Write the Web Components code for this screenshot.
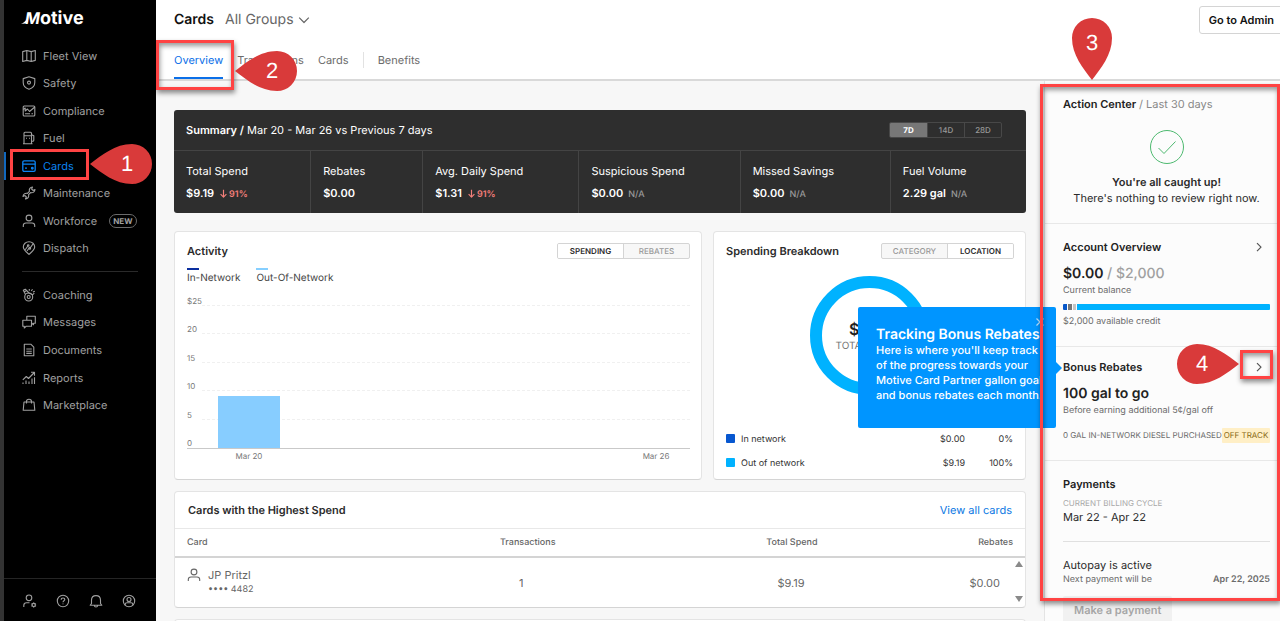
<!DOCTYPE html>
<html lang="en">
<head>
<meta charset="utf-8">
<meta name="viewport" content="width=device-width, initial-scale=1">
<title>Motive - Cards</title>
<style>
  body {
    margin: 0;
    font-family: Inter, "Liberation Sans", sans-serif;
    font-size: 11px;
    line-height: 16px;
    text-rendering: geometricPrecision;
    color: #2b2b2b;
    background: #f7f7f7;
  }
</style>
</head>
<body>

<motive-app></motive-app>

<script>

/**
 * MotiveElement
 *  - base class, renders the static template in an open shadow root
 */
class MotiveElement extends HTMLElement {

  static template = '';

  constructor() {
    super();
    const shadowRoot = this.attachShadow({mode: 'open'});
    shadowRoot.innerHTML = `
      <style>
        :host { display: block; box-sizing: border-box; }
        *, *::before, *::after { box-sizing: border-box; }
        :host([hidden]) { display: none; }
        button, select { font: inherit; color: inherit; margin: 0; padding: 0; border: 0; background: none; text-rendering: inherit; }
        h1, h2, h3, p, ul { margin: 0; padding: 0; font-size: inherit; }
        a { color: inherit; text-decoration: none; }
      </style>
      ${ this.constructor.template }`;
  }

}

/**
 * UiIcon
 *  - line icons on a 14 x 14 grid
 */
class UiIcon extends HTMLElement {

  static icons = {
    map: '<path d="M.7 2.6 4.8 1.5 9.2 2.6 13.3 1.5V11.4L9.2 12.5 4.8 11.4.7 12.5ZM4.8 1.5V11.4M9.2 2.6V12.5"/>',
    shield: '<path d="M7 .8 12.8 2.6V6.6C12.8 9.8 10.4 12.2 7 13.3 3.6 12.2 1.2 9.8 1.2 6.6V2.6Z"/><circle cx="7" cy="6.6" r="1.5"/>',
    compliance: '<rect x="1.2" y="2" width="11.6" height="10" rx="1"/><path d="M1.2 5.5 3.2 4V7L5.5 5 7.5 7.5 12.8 3M3 9.8H8M9.5 9.8H11"/>',
    fuel: '<path d="M2 12.8V2.2Q2 1.2 3 1.2H8.5Q9.5 1.2 9.5 2.2V12.8M1 12.8H10.5M2 4.8H9.5M4 7.3H5M7 7.3H8M9.5 3.8 11.8 4.8V9.3Q11.8 10.3 10.6 10.3H9.5"/>',
    card: '<rect x=".8" y="1.9" width="12.4" height="10.4" rx="1.3" stroke-width="1.3"/><path stroke-width="1.3" d="M.8 5.2H13.2M3 9.2H5"/><circle cx="10.3" cy="9.2" r=".9" fill="currentColor"/>',
    wrench: '<path d="M7.4 5.4C6.8 3 8.3 1.2 10.5 1L9.6 3 11 4.4 13 3.5C12.8 5.7 11 7.2 8.6 6.6L6.6 8.6C7.2 11 5.7 12.8 3.5 13L4.4 11 3 9.6 1 10.5C1.2 8.3 3 6.8 5.4 7.4Z"/>',
    person: '<circle cx="7" cy="4" r="2.9"/><path d="M1.3 13V11.6Q1.3 9 4 9H10Q12.7 9 12.7 11.6V13"/>',
    dispatch: '<path d="M7 13.4C4.5 11.3 1.3 8.8 1.3 6A5.7 5.3 0 0 1 12.7 6C12.7 8.8 9.5 11.3 7 13.4Z"/><path d="M3.2 8.8 6.2 4.5M5 10 7.8 6M7.8 7.4 11 3"/><circle cx="6.2" cy="4.5" r=".8"/><circle cx="7.8" cy="7.4" r=".8"/>',
    whistle: '<circle cx="6.7" cy="9" r="4"/><circle cx="6.7" cy="9" r="1.5"/><path d="M3.5 6.5 1.3 2.3 3.3 1.2 7 5 10.5 6.8 12.3 5.2M7.3 1V2.8M10.5 1.3 9.3 3M12.8 3.2 11 4M2.2 4 4.2 2.8"/>',
    messages: '<path d="M4.8 5V1.2H13.3V8.2H11.5V9.8L9.8 8.2M.8 5.2H9.5V11.3H4L2.3 13V11.3H.8Z"/>',
    document: '<path d="M2.3 1.2H8.8L11.8 4.2V12.8H2.3ZM4.3 6H9.8M4.3 8.2H9.8M4.3 10.4H9.8"/>',
    reports: '<path d="M1 13V11.5M4 13V9.5M7 13V10.5M10 13V7.5M12.5 13V6.2M.8 8.8 4.3 5.5 6.5 7.5 12.3 1.5M9 1.3H12.5V4.8"/>',
    bag: '<path d="M2 4H12L12.8 12.3H1.2ZM4.5 5.5V3.5Q4.5 1.2 7 1.2T9.5 3.5V5.5"/>',
    admin: '<circle cx="6" cy="3.8" r="2.8"/><path d="M.8 13V11.5Q.8 8.8 3.5 8.8H6.5"/><circle cx="10.7" cy="11" r="1.6"/><path d="M10.7 8.4V9.4M10.7 12.6V13.6M8.4 9.7 9.3 10.2M12.1 11.8 13 12.3M8.4 12.3 9.3 11.8M12.1 10.2 13 9.7"/>',
    help: '<circle cx="7" cy="7" r="5.7"/><path d="M5.2 5.7Q5.2 4 7 4T8.8 5.5C8.8 6.8 7 6.6 7 8.2M7 9.5V10.3"/>',
    bell: '<path d="M2.5 9.5V6.3Q2.5 1.6 7 1.6T11.5 6.3V9.5L12.8 11.3H1.2ZM5.3 11.5Q5.5 13 7 13T8.7 11.5"/>',
    account: '<circle cx="7" cy="7" r="5.7"/><circle cx="7" cy="5.5" r="2"/><path d="M3.2 11V10.3Q3.2 8.8 5 8.8H9Q10.8 8.8 10.8 10.3V11"/>',
    down: '<path stroke-width="1.2" d="M2.2 4.7 7 9.5 11.8 4.7"/>',
    right: '<path stroke-width="1.2" d="M5 3.2 9 7.2 5 11.2"/>',
    close: '<path stroke-width="1.2" d="M3.5 3.5 10.5 10.5M10.5 3.5 3.5 10.5"/>',
    fall: '<path stroke-width="1.8" d="M7 1V12.5M2.5 8 7 12.5 11.5 8"/>'
  };

  constructor() {
    super();
    this.attachShadow({mode: 'open'});
  }

  connectedCallback() {
    this.shadowRoot.innerHTML = `
      <style>
        :host { display: inline-block; flex: none; width: 14px; height: 14px; }
        :host([size="s"]) { width: 9px; height: 9px; }
        svg { display: block; width: 100%; height: 100%; fill: none; stroke: currentColor; stroke-width: 1.1; stroke-linejoin: round; }
      </style>
      <svg viewBox="0 0 14 14" aria-hidden="true">${ UiIcon.icons[this.getAttribute('name')] }</svg>`;
  }

}
customElements.define('ui-icon', UiIcon);

/**
 * NavItem
 *  - one line of the side navigation
 */
class NavItem extends MotiveElement {

  static template = `
    <style>
      :host { display: flex; color: #a0a0a0; }
      :host([active]) { color: #0b84f3; box-shadow: inset 2px 0 #1268bd; }
      a { display: flex; align-items: center; gap: 7px; flex: 1; padding-left: 18px; }
      ::slotted(span) {
        margin-left: 5px; padding: 0 3px; border: 1px solid #6b6b6b; border-radius: 7px;
        font-size: 8px; line-height: 12px; font-weight: 700;
      }
    </style>
    <a href="#"><ui-icon></ui-icon><slot></slot></a>`;

  connectedCallback() {
    const icon = this.shadowRoot.querySelector('ui-icon');
    icon.setAttribute('name', this.getAttribute('icon'));
    icon.connectedCallback();
  }

}
customElements.define('nav-item', NavItem);

/**
 * SideNav
 */
class SideNav extends MotiveElement {

  static template = `
    <style>
      :host { display: flex; flex-direction: column; background: #000; border-left: 4px solid #333; }
      .logo { display: flex; align-items: center; height: 42px; padding: 0 0 5px 17px; color: #fff; }
      .logo a { display: flex; align-items: baseline; font-size: 18px; line-height: 20px; font-weight: 700; }
      .logo i { font-size: 16px; }
      .logo svg { width: 7px; height: 6px; margin-right: -3px; }
      nav { display: grid; grid-auto-rows: 1fr; }
      .main { height: 220px; }
      .more { height: 138px; }
      hr { width: 116px; margin: 9px 18px; border: 0; border-top: 1px solid #2a2a2a; }
      footer { display: flex; gap: 19px; margin-top: auto; height: 43px; padding: 2px 18px 0 19px; align-items: center; border-top: 1px solid #252525; color: #a0a0a0; }
      footer button { display: flex; }
    </style>
    <div class="logo"><a href="#" aria-label="Motive">
      <svg viewBox="0 0 7 6" aria-hidden="true"><path fill="#fff" d="M0 6Q3 5 7 0V4Q4 6 0 6Z"/></svg><i>M</i>otive</a></div>
    <nav class="main">
      <nav-item icon="map">Fleet View</nav-item>
      <nav-item icon="shield">Safety</nav-item>
      <nav-item icon="compliance">Compliance</nav-item>
      <nav-item icon="fuel">Fuel</nav-item>
      <nav-item icon="card" active>Cards</nav-item>
      <nav-item icon="wrench">Maintenance</nav-item>
      <nav-item icon="person">Workforce <span>NEW</span></nav-item>
      <nav-item icon="dispatch">Dispatch</nav-item>
    </nav>
    <hr>
    <nav class="more">
      <nav-item icon="whistle">Coaching</nav-item>
      <nav-item icon="messages">Messages</nav-item>
      <nav-item icon="document">Documents</nav-item>
      <nav-item icon="reports">Reports</nav-item>
      <nav-item icon="bag">Marketplace</nav-item>
    </nav>
    <footer>
      <button aria-label="Admin"><ui-icon name="admin"></ui-icon></button>
      <button aria-label="Help"><ui-icon name="help"></ui-icon></button>
      <button aria-label="Notifications"><ui-icon name="bell"></ui-icon></button>
      <button aria-label="Account"><ui-icon name="account"></ui-icon></button>
    </footer>`;

}
customElements.define('side-nav', SideNav);

/**
 * PageHeader
 *  - title, group picker and tabs
 */
class PageHeader extends MotiveElement {

  static template = `
    <style>
      :host { background: #fff; border-bottom: 2px solid #d9d9d9; height: 81px; padding-left: 18px; overflow: hidden; }
      .title { display: flex; align-items: center; height: 40px; font-size: 14px; }
      h1 { font-weight: 600; color: #111; }
      label { display: flex; align-items: center; margin-left: 11px; gap: 3px; color: #666; }
      select { appearance: none; field-sizing: content; }
      .admin {
        margin-left: auto; margin-right: -4px; height: 28px; padding: 0 9px; border: 1px solid #d4d4d4; border-radius: 3px;
        background: #fff; font-size: 11px; font-weight: 600; color: #111;
      }
      nav { display: flex; align-items: stretch; gap: 14px; height: 39px; color: #6b6b6b; }
      nav a { display: flex; align-items: center; padding-top: 2px; border-bottom: 2px solid transparent; }
      nav a[aria-current] { color: #0b6fe8; border-color: #0b6fe8; }
      nav i { align-self: center; width: 1px; height: 16px; background: #e2e2e2; }
    </style>
    <div class="title">
      <h1>Cards</h1>
      <label><select aria-label="Group"><option>All Groups</option></select><ui-icon name="down"></ui-icon></label>
      <button class="admin">Go to Admin</button>
    </div>
    <nav>
      <a href="#" aria-current="page">Overview</a>
      <a href="#">Transactions</a>
      <a href="#">Cards</a>
      <i></i>
      <a href="#">Benefits</a>
    </nav>`;

}
customElements.define('page-header', PageHeader);

/**
 * SegmentSwitch
 *  - buttons come from the options attribute, selected is an index
 */
class SegmentSwitch extends MotiveElement {

  static template = `
    <style>
      :host { display: flex; height: 16px; border: 1px solid #d4d4d4; border-radius: 2px; background: #f7f7f7; color: #999; overflow: hidden; }
      button { width: 65px; font-size: 8px; line-height: 14px; font-weight: 500; }
      button + button { width: 66px; border-left: 1px solid #d4d4d4; }
      button[aria-pressed="true"] { background: #fff; color: #2b2b2b; font-weight: 600; }
      :host([dark]) { background: none; border-color: #484848; }
      :host([dark]) button { width: 37px; }
      :host([dark]) button + button { border-color: #484848; }
      :host([dark]) button[aria-pressed="true"] { background: #777; color: #fff; font-weight: 700; }
    </style>`;

  connectedCallback() {
    const selected = Number(this.getAttribute('selected') || 0);
    this.getAttribute('options').split(',').forEach((option, idx) => {
      const button = document.createElement('button');
      button.textContent = option;
      button.setAttribute('aria-pressed', idx === selected);
      this.shadowRoot.append(button);
    });
    this.shadowRoot.addEventListener('click', ({target}) => {
      this.shadowRoot.querySelectorAll('button').forEach(button => {
        button.setAttribute('aria-pressed', button === target);
      });
    });
  }

}
customElements.define('segment-switch', SegmentSwitch);

/**
 * SummaryStat
 */
class SummaryStat extends MotiveElement {

  static template = `
    <style>
      :host { padding: 12px; white-space: nowrap; color: #fff; }
      :host(:not(:first-of-type)) { border-left: 1px solid #444; }
      .value { display: flex; gap: 5px; align-items: baseline; height: 16px; margin-top: 6px; font-weight: 600; }
      ::slotted([slot="note"]) { font-size: 9px; font-weight: 500; color: #999; }
      ::slotted(.fall) { font-weight: 600; color: #f47f7a; }
    </style>
    <slot name="label"></slot>
    <div class="value"><slot></slot><slot name="note"></slot></div>`;

}
customElements.define('summary-stat', SummaryStat);

/**
 * SummaryBar
 */
class SummaryBar extends MotiveElement {

  static template = `
    <style>
      :host { background: #2e2e2e; color: #fff; border-radius: 3px; }
      header { display: flex; justify-content: space-between; align-items: center; height: 41px; padding: 0 24px 0 12px; border-bottom: 1px solid #444; }
      h2 { font-weight: 400; }
      b { font-weight: 600; }
      .stats { display: grid; grid-template-columns: 136fr 112fr 156fr 161fr 150fr 136fr; }
      .fall ui-icon { margin-right: 1px; vertical-align: -1px; }
    </style>
    <header>
      <h2><b>Summary /</b> Mar 20 - Mar 26 vs Previous 7 days</h2>
      <segment-switch dark options="7D,14D,28D"></segment-switch>
    </header>
    <div class="stats">
      <summary-stat><span slot="label">Total Spend</span>$9.19 <span slot="note" class="fall"><ui-icon name="fall" size="s"></ui-icon>91%</span></summary-stat>
      <summary-stat><span slot="label">Rebates</span>$0.00</summary-stat>
      <summary-stat><span slot="label">Avg. Daily Spend</span>$1.31 <span slot="note" class="fall"><ui-icon name="fall" size="s"></ui-icon>91%</span></summary-stat>
      <summary-stat><span slot="label">Suspicious Spend</span>$0.00 <span slot="note">N/A</span></summary-stat>
      <summary-stat><span slot="label">Missed Savings</span>$0.00 <span slot="note">N/A</span></summary-stat>
      <summary-stat><span slot="label">Fuel Volume</span>2.29 gal <span slot="note">N/A</span></summary-stat>
    </div>`;

}
customElements.define('summary-bar', SummaryBar);

/**
 * UiCard
 *  - white box with a heading row, "actions" slot on the right
 */
class UiCard extends MotiveElement {

  static template = `
    <style>
      :host { display: flex; flex-direction: column; background: #fff; border: 1px solid #e4e4e4; border-bottom-color: #d4d4d4; border-radius: 4px; }
      header { display: flex; justify-content: space-between; align-items: center; padding: 11px 11px 0 12px; min-height: 27px; }
      h2 { font-weight: 600; }
      :host([ruled]) header { padding: 0 13px; height: 37px; border-bottom: 1px solid #e8e8e8; }
    </style>
    <header><h2><slot name="heading"></slot></h2><slot name="actions"></slot></header>
    <slot></slot>`;

}
customElements.define('ui-card', UiCard);

/**
 * ActivityChart
 *  - one bar a day, axis from 0 to 25 dollars
 */
class ActivityChart extends MotiveElement {

  static max = 25;

  static days = [
    {label: 'Mar 20', spend: 9.19}, {spend: 0}, {spend: 0}, {spend: 0}, {spend: 0}, {spend: 0}, {label: 'Mar 26', spend: 0}
  ];

  static template = `
    <style>
      :host { padding: 9px 11px 17px 12px; }
      .legend { display: flex; gap: 16px; font-size: 10px; line-height: 14px; color: #444; }
      .legend span::before { content: ""; display: block; width: 12px; height: 2px; margin-bottom: 1px; background: #0b2f9f; }
      .legend span + span::before { background: #86cfff; }
      .plot { display: grid; height: 153px; margin-top: 11px; }
      .ticks, .bars { grid-area: 1 / 1; }
      .ticks { display: flex; flex-direction: column; justify-content: space-between; font-size: 8px; line-height: 10px; color: #777; }
      .ticks div { display: flex; }
      .ticks span { width: 15px; }
      .ticks i { flex: 1; border-bottom: 1px dashed #f0f0f0; }
      .ticks div:last-child { border-bottom: 1px solid #c9c9c9; }
      .ticks div:last-child i { border: 0; }
      .bars, .days { display: grid; grid-template-columns: repeat(7, 1fr); margin-left: 28px; }
      .bars { align-items: end; padding: 10px 0 1px; }
      .bars i { margin: 0 3px; background: #87cdff; }
      .days { margin-top: 2px; font-size: 8px; line-height: 11px; text-align: center; color: #777; }
    </style>
    <div class="legend"><span>In-Network</span><span>Out-Of-Network</span></div>
    <div class="plot"><div class="ticks"></div><div class="bars"></div></div>
    <div class="days"></div>`;

  connectedCallback() {
    const {max, days} = ActivityChart;
    this.shadowRoot.querySelector('.ticks').innerHTML = ['$25', 20, 15, 10, 5, 0].map(tick => `<div><span>${ tick }</span><i></i></div>`).join('');
    this.shadowRoot.querySelector('.bars').innerHTML = days.map(({spend}) => `<i style="height:${ spend / max * 100 }%"></i>`).join('');
    this.shadowRoot.querySelector('.days').innerHTML = days.map(({label}) => `<span>${ label || '' }</span>`).join('');
  }

}
customElements.define('activity-chart', ActivityChart);

/**
 * SpendingBreakdown
 *  - donut and its legend
 */
class SpendingBreakdown extends MotiveElement {

  static template = `
    <style>
      :host { display: flex; flex-direction: column; flex: 1; padding: 17px 12px 3px; }
      .donut { display: grid; place-items: center; }
      .donut > * { grid-area: 1 / 1; }
      svg { width: 119px; height: 119px; }
      .total { text-align: center; font-size: 10px; line-height: 14px; color: #777; }
      b { display: block; font-size: 16px; line-height: 20px; font-weight: 600; color: #222; }
      table { width: 100%; margin-top: auto; border-collapse: collapse; font-size: 9px; line-height: 16px; color: #333; }
      td, th { height: 24px; padding: 0; font-weight: 400; text-align: right; }
      th { text-align: left; }
      td:last-child { width: 48px; }
      th::before { content: ""; display: inline-block; width: 9px; height: 9px; margin-right: 6px; border-radius: 1px; background: #0757d0; vertical-align: -1px; }
      tr + tr th::before { background: #00b2ff; }
    </style>
    <div class="donut">
      <svg viewBox="0 0 119 119" aria-hidden="true"><circle cx="59.5" cy="59.5" r="53.5" fill="none" stroke="#00b2ff" stroke-width="12"/></svg>
      <div class="total"><b>$9.19</b>TOTAL SPEND</div>
    </div>
    <table>
      <tr><th scope="row">In network</th><td>$0.00</td><td>0%</td></tr>
      <tr><th scope="row">Out of network</th><td>$9.19</td><td>100%</td></tr>
    </table>`;

}
customElements.define('spending-breakdown', SpendingBreakdown);

/**
 * TopCards
 *  - table of the cards with the highest spend
 */
class TopCards extends MotiveElement {

  static template = `
    <style>
      :host { position: relative; }
      table { width: 100%; table-layout: fixed; border-collapse: collapse; line-height: 16px; color: #666; }
      th { height: 28px; padding: 0 12px; font-size: 9px; font-weight: 500; border-bottom: 2px solid #d4d4d4; }
      td { height: 50px; padding: 0 25px 0 12px; }
      th:nth-child(1) { width: 33%; text-align: left; }
      th:nth-child(2) { width: 17%; text-align: center; }
      td:nth-child(2) { text-align: center; }
      th:nth-child(3) { width: 27%; }
      th:nth-child(n+3), td:nth-child(n+3) { text-align: right; }
      .holder { display: flex; gap: 7px; line-height: 14px; }
      small { display: block; font-size: 9px; line-height: 15px; }
      .scroll { position: absolute; right: 2px; bottom: 5px; display: flex; flex-direction: column; justify-content: space-between; height: 41px; }
      .scroll i { border: 4px solid transparent; border-top-width: 0; border-bottom: 6px solid #8a8a8a; }
      .scroll i + i { border-top: 6px solid #8a8a8a; border-bottom-width: 0; }
    </style>
    <table>
      <thead><tr><th>Card</th><th>Transactions</th><th>Total Spend</th><th>Rebates</th></tr></thead>
      <tbody><tr>
        <td><div class="holder"><ui-icon name="person"></ui-icon><div>JP Pritzl<small>•••• 4482</small></div></div></td>
        <td>1</td><td>$9.19</td><td>$0.00</td>
      </tr></tbody>
    </table>
    <div class="scroll"><i></i><i></i></div>`;

}
customElements.define('top-cards', TopCards);

/**
 * PanelSection
 *  - section of the right panel, "link" adds the chevron
 */
class PanelSection extends MotiveElement {

  static template = `
    <style>
      :host { padding: 15px 10px 17px 18px; border-bottom: 1px solid #e8e8e8; }
      :host([compact]) { padding-top: 12px; }
      :host(:last-of-type) { border: 0; }
      header { display: flex; justify-content: space-between; align-items: center; height: 16px; white-space: nowrap; }
      h2 { font-weight: 600; color: #222; }
      button { display: none; margin-right: 4px; color: #555; }
      :host([link]) button { display: flex; }
    </style>
    <header><h2><slot name="heading"></slot></h2><button aria-label="Open"><ui-icon name="right"></ui-icon></button></header>
    <slot></slot>`;

}
customElements.define('panel-section', PanelSection);

/**
 * SidePanel
 */
class SidePanel extends MotiveElement {

  static template = `
    <style>
      :host { background: #fcfcfc; border-left: 1px solid #e4e4e4; white-space: nowrap; overflow: hidden; }
      .muted { font-weight: 400; color: #888; }
      .done { display: block; width: 34px; height: 34px; margin: 18px auto 10px; }
      .center { text-align: center; }
      b { font-weight: 600; }
      .amount { margin-top: 9px; font-size: 14px; line-height: 20px; font-weight: 600; color: #222; }
      .amount span { font-weight: 500; color: #a0a0a0; }
      .sub { font-size: 9px; line-height: 14px; color: #6b6b6b; }
      .meter { display: flex; gap: 1px; height: 6px; margin: 6px 0 5px; border-radius: 1px; overflow: hidden; }
      .meter i { width: 4px; background: #0757c8; }
      .meter i:nth-child(2) { background: #777; }
      .meter i:nth-child(3) { width: 3px; background: #c4c4c4; }
      .meter i:last-child { flex: 1; background: #00b2ff; }
      .row { display: flex; justify-content: space-between; }
      .track { align-items: center; margin-top: 10px; font-size: 8px; line-height: 15px; color: #6b6b6b; }
      .track mark { padding: 0 2px; border-radius: 1px; background: #ffefc6; color: #8a6a14; }
      .caps { margin-top: 5px; font-size: 8px; line-height: 12px; color: #a8a8a8; }
      hr { margin: 16px 0 15px; border: 0; border-top: 1px solid #e0e0e0; }
      .pay { height: 28px; margin-top: 9px; padding: 0 11px; border-radius: 2px; background: #f1f1f1; color: #a6a6a6; font-weight: 600; }
    </style>
    <panel-section>
      <span slot="heading">Action Center <span class="muted">/ Last 30 days</span></span>
      <svg class="done" viewBox="0 0 34 34" fill="none" stroke="#4db96f" aria-hidden="true"><circle cx="17" cy="17" r="16.5"/><path d="M8.5 18 14 23.5 25.5 11.5"/></svg>
      <div class="center"><b>You're all caught up!</b><br>There's nothing to review right now.</div>
    </panel-section>
    <panel-section link>
      <span slot="heading">Account Overview</span>
      <div class="amount">$0.00 <span>/ $2,000</span></div>
      <div class="sub">Current balance</div>
      <div class="meter"><i></i><i></i><i></i><i></i></div>
      <div class="sub">$2,000 available credit</div>
    </panel-section>
    <panel-section link compact>
      <span slot="heading">Bonus Rebates</span>
      <div class="amount">100 gal to go</div>
      <div class="sub">Before earning additional 5¢/gal off</div>
      <div class="row track"><span>0 GAL IN-NETWORK DIESEL PURCHASED</span><mark>OFF TRACK</mark></div>
    </panel-section>
    <panel-section>
      <span slot="heading">Payments</span>
      <div class="caps">CURRENT BILLING CYCLE</div>
      <div>Mar 22 - Apr 22</div>
      <hr>
      <div>Autopay is active</div>
      <div class="row sub"><span>Next payment will be</span><b>Apr 22, 2025</b></div>
      <button class="pay" disabled>Make a payment</button>
    </panel-section>`;

}
customElements.define('side-panel', SidePanel);

/**
 * TourTip
 *  - product tour bubble, arrow on its right side
 */
class TourTip extends MotiveElement {

  static template = `
    <style>
      :host { position: absolute; width: 198px; height: 121px; padding: 19px 12px 0 18px; border-radius: 2px; background: #0095ff; color: #fff; font-weight: 500; line-height: 15px; white-space: nowrap; }
      :host::after { content: ""; position: absolute; left: 100%; top: 55px; border: 6px solid transparent; border-left-color: #0095ff; border-right-width: 0; }
      h3 { font-size: 14px; line-height: 17px; font-weight: 600; }
      button { position: absolute; top: 8px; right: 9px; display: flex; color: #b5ddff; }
    </style>
    <button aria-label="Close"><ui-icon name="close"></ui-icon></button>
    <h3><slot name="heading"></slot></h3>
    <slot></slot>`;

}
customElements.define('tour-tip', TourTip);

/**
 * CalloutBox
 *  - red frame over a part of the page
 */
class CalloutBox extends MotiveElement {

  static template = `
    <style>
      :host { position: absolute; border: 3px solid #ff4343; pointer-events: none; }
      :host([raised]) { box-shadow: 1px 3px 5px rgba(0,0,0,.45), inset 1px 3px 5px rgba(0,0,0,.4); }
    </style>`;

}
customElements.define('callout-box', CalloutBox);

/**
 * CalloutPin
 *  - numbered drop, the point attribute is left, right or down
 */
class CalloutPin extends MotiveElement {

  static template = `
    <style>
      :host { position: absolute; display: grid; width: 62px; height: 40px; pointer-events: none; }
      :host([point="down"]) { width: 40px; height: 62px; }
      svg, span { grid-area: 1 / 1; }
      svg { width: 100%; height: 100%; overflow: visible; fill: #d93a3a; }
      :host([point="right"]) svg { transform: scaleX(-1); }
      span { width: 50px; justify-self: end; z-index: 1; font: 22px/40px "Liberation Sans", Arial, sans-serif; text-align: center; color: #fff; }
      :host([point="right"]) span { justify-self: start; }
      :host([point="down"]) span { width: 40px; line-height: 50px; }
    </style>
    <svg viewBox="0 0 62 40" aria-hidden="true"><path d="M0 20C12 11 25 0 42 0A20 20 0 0 1 42 40C25 40 12 29 0 20Z"/></svg>
    <span><slot></slot></span>`;

  connectedCallback() {
    if (this.getAttribute('point') === 'down') {
      const svg = this.shadowRoot.querySelector('svg');
      svg.setAttribute('viewBox', '0 0 40 62');
      svg.firstElementChild.setAttribute('d', 'M20 62C11 50 0 37 0 20A20 20 0 0 1 40 20C40 37 29 50 20 62Z');
    }
  }

}
customElements.define('callout-pin', CalloutPin);

/**
 * MotiveApp
 *  - page frame
 */
class MotiveApp extends MotiveElement {

  static template = `
    <style>
      :host { position: relative; display: grid; grid-template: auto 1fr / 156px 1fr 236px; height: 100vh; overflow: hidden; }
      side-nav { grid-row: 1 / 3; }
      page-header { grid-column: 2 / 4; }
      main { min-height: 0; overflow: hidden; padding: 29px 18px 0; }
      .charts { display: grid; grid-template-columns: 528fr 313fr; gap: 11px; margin: 18px 0 11px; }
      .next { margin-top: 11px; height: 120px; }
      a { color: #0b78e3; }
      tour-tip { top: 307px; right: 224px; }
      .b1 { left: 10px; top: 149px; width: 79px; height: 31px; }
      .b2 { left: 156px; top: 40px; width: 78px; height: 50px; }
      .b3 { right: 0; top: 84px; width: 240px; height: 517px; }
      .b4 { right: 7px; top: 350px; width: 33px; height: 29px; }
      .p1 { left: 90px; top: 144px; }
      .p2 { left: 235px; top: 51px; }
      .p3 { right: 168px; top: 18px; }
      .p4 { right: 41px; top: 344px; }
    </style>
    <side-nav></side-nav>
    <page-header></page-header>
    <main>
      <summary-bar></summary-bar>
      <div class="charts">
        <ui-card>
          <span slot="heading">Activity</span>
          <segment-switch slot="actions" options="SPENDING,REBATES"></segment-switch>
          <activity-chart></activity-chart>
        </ui-card>
        <ui-card>
          <span slot="heading">Spending Breakdown</span>
          <segment-switch slot="actions" options="CATEGORY,LOCATION" selected="1"></segment-switch>
          <spending-breakdown></spending-breakdown>
        </ui-card>
      </div>
      <ui-card ruled>
        <span slot="heading">Cards with the Highest Spend</span>
        <a slot="actions" href="#">View all cards</a>
        <top-cards></top-cards>
      </ui-card>
      <ui-card class="next"></ui-card>
    </main>
    <side-panel></side-panel>
    <tour-tip>
      <span slot="heading">Tracking Bonus Rebates</span>
      Here is where you'll keep track<br>of the progress towards your<br>Motive Card Partner gallon goal<br>and bonus rebates each month.
    </tour-tip>
    <callout-box class="b1"></callout-box>
    <callout-box class="b2" raised></callout-box>
    <callout-box class="b3" raised></callout-box>
    <callout-box class="b4" raised></callout-box>
    <callout-pin class="p1" point="left">1</callout-pin>
    <callout-pin class="p2" point="left">2</callout-pin>
    <callout-pin class="p3" point="down">3</callout-pin>
    <callout-pin class="p4" point="right">4</callout-pin>`;

}
customElements.define('motive-app', MotiveApp);

</script>
</body>
</html>
